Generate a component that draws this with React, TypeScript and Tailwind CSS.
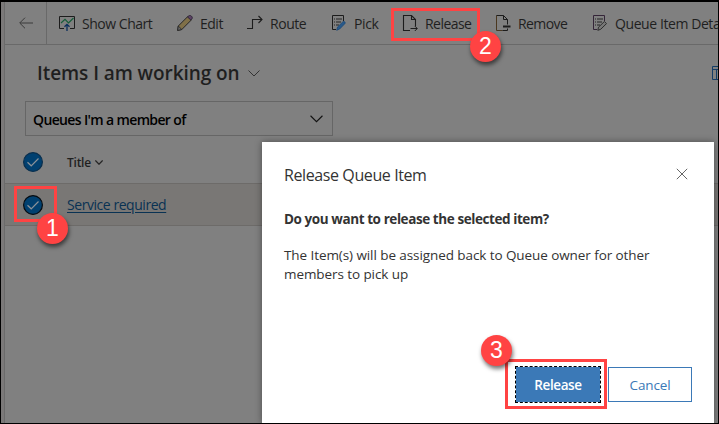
import type { ReactNode } from "react";

function ChartIcon() {
  return (
    <svg width="16" height="16" viewBox="0 0 16 16" fill="none">
      <path d="M5 13.5H.5V1.5h15v12H11" stroke="#1c1c1c" />
      <path d="M2 8l4-3.6L9.5 8l5-5" stroke="#145c38" strokeWidth="1.2" />
      <path d="M8 16V9.5M5.5 11.8L8 9.3l2.5 2.5" stroke="#0b2f5c" strokeWidth="1.3" />
    </svg>
  );
}

function PencilIcon() {
  return (
    <svg width="16" height="16" viewBox="0 0 16 16" fill="none">
      <path d="M1.3 11L10.8 1.5 14.3 5 4.8 14.5.6 15.4z" fill="#807048" stroke="#262626" />
      <path d="M10.5 2L12 .7c.8-.5 1.6-.3 2.4.4.9.9 1.2 1.8.6 2.6L13.8 5z" fill="#5c4266" stroke="#302838" />
      <path d="M1.3 11l3.5 3.5-4.2.9z" fill="#686868" stroke="#262626" strokeWidth=".8" />
    </svg>
  );
}

function RouteIcon() {
  return (
    <svg width="16" height="16" viewBox="0 0 16 16" fill="none" stroke="#1c1c1c">
      <path d="M0 13.5h5.5v-9H15M11.5 1L15 4.5 11.5 8" strokeWidth="1.1" />
    </svg>
  );
}

function PickIcon() {
  return (
    <svg width="16" height="16" viewBox="0 0 16 16" fill="none">
      <path d="M5 14.5H1.5V.5h11V6" stroke="#1c1c1c" />
      <path d="M3 4h1M5 4h6M3 7h1M5 7h5M3 10h1M5 10h3" stroke="#252525" />
      <path d="M6.5 12L12 6.7c1.2-.8 2.7.4 2 1.8L8.7 14l-3 1.3z" fill="#28598a" stroke="#174572" strokeWidth=".7" />
    </svg>
  );
}

function ReleaseIcon() {
  return (
    <svg width="16" height="16" viewBox="0 0 16 16" fill="none" stroke="#1c1c1c">
      <path d="M8 15.5H1.5V.5h8l4 4V11M9.5.5v4h4" strokeWidth="1.1" />
      <path d="M8.5 13.5H15M12.8 11l2.5 2.5-2.5 2.5" />
    </svg>
  );
}

function RemoveIcon() {
  return (
    <svg width="16" height="16" viewBox="0 0 16 16" fill="none" stroke="#1c1c1c">
      <path d="M7.5 15.5h-6V.5" stroke="#4b3820" />
      <path d="M1.5.5h7l4 4v5M8.5.5v4h4M7.5 15.5h5v-2" />
      <path d="M8 11.5h7.5" strokeWidth="2" />
    </svg>
  );
}

function DetailsIcon() {
  return (
    <svg width="16" height="16" viewBox="0 0 16 16" fill="none">
      <path d="M5 14.5H1.5V.5h11V6" stroke="#342538" />
      <path d="M3 4h1M5 4h6M3 7h1M5 7h5M3 10h1M5 10h3" stroke="#252525" />
      <path d="M6.5 12.2L12.4 6.5l2.1 2.1-5.8 5.7-2.9 1z" fill="#777" stroke="#252525" strokeWidth=".9" />
    </svg>
  );
}

function Command({ icon, label, className }: { icon: ReactNode; label: string; className: string }) {
  return (
    <div className={`flex shrink-0 items-center whitespace-nowrap text-[14px] leading-5 ${className}`}>
      <span className="w-[23px] shrink-0">{icon}</span>
      <span className="pt-px">{label}</span>
    </div>
  );
}

function Chevron({ className }: { className: string }) {
  return (
    <svg className={className} viewBox="0 0 12 7" fill="none" stroke="currentColor">
      <path d="M.5.5L6 6 11.5.5" />
    </svg>
  );
}

function Check({ ring }: { ring: string }) {
  return (
    <svg width="20" height="20" viewBox="0 0 20 20" fill="none">
      <circle cx="10" cy="10" r="9.4" fill="#004070" stroke={ring} strokeWidth="1.2" />
      <path d="M4.5 10.2l3.7 3.6 7.3-7.3" stroke="#8b9299" strokeWidth="1.2" />
    </svg>
  );
}

function Badge({ n, className }: { n: string; className: string }) {
  return (
    <div
      className={`absolute flex size-[31px] items-center justify-center rounded-full bg-[#ff4343] font-['Liberation_Sans',sans-serif] text-[23px] leading-none text-white shadow-[1px_3px_4px_rgba(0,0,0,0.55)] ${className}`}
    >
      {n}
    </div>
  );
}

function Dialog() {
  return (
    <div className="absolute left-[262px] top-[142px] flex h-[281px] w-[452px] flex-col bg-white px-[22px] text-[#333] shadow-[0_0_7px_rgba(0,0,0,0.4)]">
      <div className="flex items-start justify-between pt-5">
        <h2 className="whitespace-nowrap text-[16px] leading-[26px] tracking-[-0.4px]">Release Queue Item</h2>
        <svg className="mr-1 mt-1.5" width="12" height="12" viewBox="0 0 12 12" stroke="#666">
          <path d="M.8.8l10.4 10.4M11.2.8L.8 11.2" />
        </svg>
      </div>
      <p className="mt-[21px] whitespace-nowrap text-[13.5px] font-bold leading-5 tracking-[-0.42px]">
        Do you want to release the selected item?
      </p>
      <p className="mt-[17px] whitespace-nowrap text-[13.5px] leading-[19px] tracking-[-0.08px]">
        The Item(s) will be assigned back to Queue owner for other
        <br />
        members to pick up
      </p>
      <div className="mt-auto flex justify-end gap-[7px] pb-5 text-[13.5px]">
        <button className="h-[37px] w-[86px] border border-dashed border-white bg-[#3b79b7] bg-clip-padding pt-px font-semibold tracking-[-0.4px] text-white outline-1 -outline-offset-1 outline-dashed outline-black">
          Release
        </button>
        <button className="mt-px h-[35px] w-[84px] border border-[#3b79b7] pt-px tracking-[-0.15px] text-[#3b79b7]">Cancel</button>
      </div>
    </div>
  );
}

export default function App() {
  return (
    <div className="relative h-[424px] w-[719px] overflow-hidden border border-t-2 border-black bg-[#808080] font-['Open_Sans','Noto_Sans',sans-serif] text-[#1f1f1f]">
      <div className="flex h-full">
        <div className="w-1 shrink-0 border-r border-[#6b6b6b] bg-[#7b7979]" />
        <main className="min-w-0 flex-1">
          <header className="flex h-[43px] items-center border-b border-[#696969]">
            <div className="flex h-full w-[42px] shrink-0 items-center justify-center border-r border-[#696969]">
              <svg width="14" height="12" viewBox="0 0 14 12" fill="none" stroke="#3b3b3b">
                <path d="M14 6H1M6 .7L.7 6 6 11.3" />
              </svg>
            </div>
            <Command icon={<ChartIcon />} label="Show Chart" className="ml-3 w-[118px] tracking-[-0.47px]" />
            <Command icon={<PencilIcon />} label="Edit" className="w-[70px] tracking-[-0.5px]" />
            <Command icon={<RouteIcon />} label="Route" className="w-[84px] tracking-[-0.45px]" />
            <Command icon={<PickIcon />} label="Pick" className="w-[71px] tracking-[-0.4px]" />
            <Command icon={<ReleaseIcon />} label="Release" className="w-[93px] tracking-[-0.55px]" />
            <Command icon={<RemoveIcon />} label="Remove" className="w-[98px] tracking-[-0.6px]" />
            <Command icon={<DetailsIcon />} label="Queue Item Deta" className="-ml-px tracking-[-0.42px]" />
          </header>

          <div className="flex h-14 items-center pl-8">
            <h1 className="whitespace-nowrap text-[19px] font-semibold leading-7 tracking-[-0.07px]">Items I am working on</h1>
            <Chevron className="ml-2 h-[7px] w-3 text-[#333]" />
            <svg className="ml-auto" width="6" height="14" viewBox="0 0 6 14" fill="none">
              <path d="M6 .5H.5v13H6M.5 3.5H6M4.5 3.5v10" stroke="#153d66" />
            </svg>
          </div>

          <div className="ml-5 flex h-[35px] w-[308px] items-center justify-between border border-[#666] pl-[7px] pr-[9px] text-black">
            <span className="whitespace-nowrap pt-px text-[14px] font-semibold tracking-[-0.64px]">Queues I'm a member of</span>
            <Chevron className="h-[8px] w-[13px] text-[#111]" />
          </div>

          <div className="flex h-[47px] items-center pl-[18px] pt-[5px]">
            <Check ring="#0b2f4d" />
            <span className="ml-6 pt-px text-[12px] font-semibold tracking-[-0.25px]">Title</span>
            <Chevron className="ml-1 h-[5px] w-2 stroke-2 text-[#252525]" />
          </div>
          <div className="flex h-[43px] items-center border-y border-[#6d6b69] bg-[#797775] pl-[18px]">
            <Check ring="#060b10" />
            <a className="ml-6 text-[14px] tracking-[-0.45px] text-[#093253] underline underline-offset-2">Service required</a>
          </div>
        </main>
      </div>

      <div className="absolute -left-px -top-0.5 h-[423px] w-[718px] overflow-hidden">
        <Dialog />
        <div className="absolute left-[391px] top-2 h-[33px] w-[89px] border-3 border-[#ff4343]" />
        <Badge n="2" className="left-[470px] top-[31px]" />
        <div className="absolute left-3.5 top-[186px] h-9 w-[43px] border-3 border-[#ff4343]" />
        <Badge n="1" className="left-[37px] top-[213px]" />
        <div className="absolute left-[505px] top-[359px] h-[50px] w-[102px] border-3 border-[#ff4343]" />
        <Badge n="3" className="left-[481px] top-[335px]" />
      </div>
    </div>
  );
}
